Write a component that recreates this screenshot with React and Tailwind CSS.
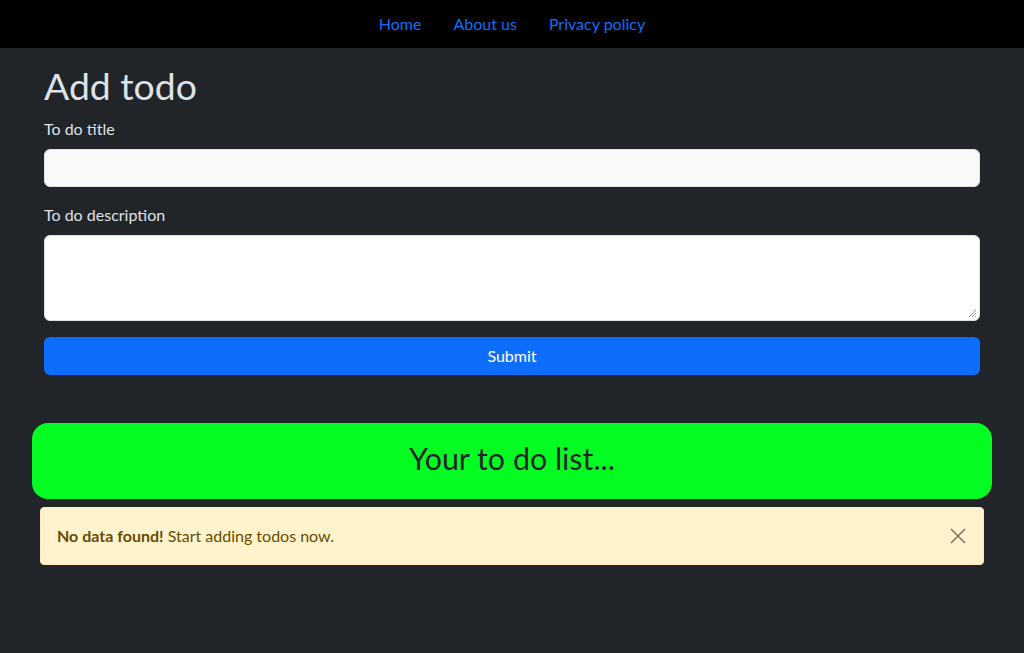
export default function App() {
  const font = { fontFamily: '"Lato", "Noto Sans", sans-serif' };
  return (
    <div className="min-h-[653px] bg-[#212529] text-[#dee2e6]" style={font}>
      <nav className="h-12 bg-black flex justify-center items-center">
        <a className="px-4 py-2 text-base text-[#0d6efd] leading-6" href="#">Home</a>
        <a className="px-4 py-2 text-base text-[#0d6efd] leading-6" href="#">About us</a>
        <a className="px-4 py-2 text-base text-[#0d6efd] leading-6" href="#">Privacy policy</a>
      </nav>
      <div className="w-[960px] mx-auto">
        <div className="px-3 pt-4">
          <h1 className="text-[37.36px] leading-[1.2] mb-2 font-normal">Add todo</h1>
          <div className="mb-4">
            <label className="block text-base leading-6 mb-2">To do title</label>
            <div className="h-[38px] bg-[#f8f9fa] border border-[#dee2e6] rounded-md"></div>
          </div>
          <div className="mb-4">
            <label className="block text-base leading-6 mb-2">To do description</label>
            <div className="relative h-[86px] bg-white border border-[#dee2e6] rounded-md">
              <svg className="absolute right-[2px] bottom-[2px]" width="9" height="9" viewBox="0 0 9 9">
                <path d="M8 1L1 8M8 4L4 8M8 7L7 8" stroke="#999" strokeWidth="1" />
              </svg>
            </div>
          </div>
          <button className="w-full h-[38px] bg-[#0d6efd] text-white rounded-md text-base leading-6">Submit</button>
        </div>
        <div className="mt-12 h-[76px] bg-[#03fd22] rounded-2xl flex items-center justify-center pb-[6px]">
          <h2 className="text-[30.4px] leading-[1.2] text-[#212529]">Your to do list...</h2>
        </div>
        <div className="mx-2 mt-2 h-[58px] bg-[#fff3cd] border border-[#ffecb5] rounded-[4px] flex items-center pl-4 pr-4 text-[#664d03] text-base">
          <span className="flex-1"><strong className="font-bold">No data found!</strong> Start adding todos now.</span>
          <svg width="16" height="16" viewBox="0 0 16 16" className="mr-[1px]">
            <path d="M1 1L15 15M15 1L1 15" stroke="#7d7562" strokeWidth="1.6" />
          </svg>
        </div>
      </div>
    </div>
  );
}
